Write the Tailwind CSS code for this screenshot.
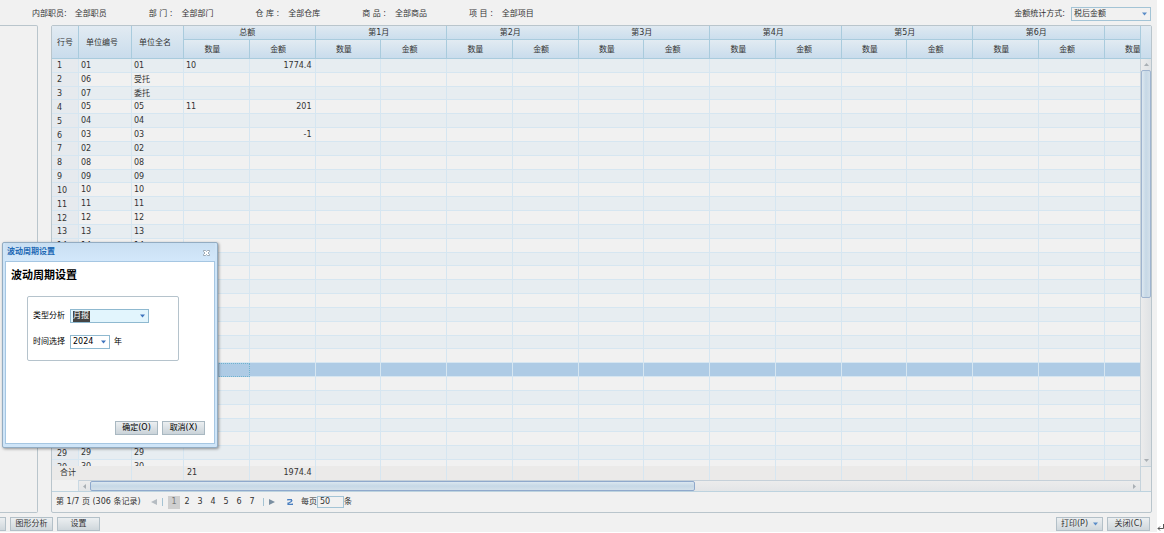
<!DOCTYPE html>
<html lang="zh-CN">
<head>
  <meta charset="UTF-8">
  <meta name="viewport" content="width=device-width, initial-scale=1.0">
  <title>波动周期分析</title>
  <script src="https://cdn.jsdelivr.net/npm/@tailwindcss/browser@4"></script>
</head>
<body class="bg-white font-['DejaVu_Sans','Noto_Sans_CJK_SC',sans-serif] text-[8px] leading-3 text-[#333] overflow-hidden">
  <div class="relative flex h-screen pb-px">
    <main class="flex flex-1 min-w-0 flex-col bg-[#f1f1f1]">

      <!-- filters -->
      <header class="flex h-[25px] shrink-0 items-center justify-between pl-8 pr-[6px] pt-[2px]">
        <dl class="flex gap-[42px] whitespace-nowrap">
          <div class="flex gap-2"><dt>内部职员:</dt><dd>全部职员</dd></div>
          <div class="flex gap-[9px]"><dt>部 门 :</dt><dd>全部部门</dd></div>
          <div class="flex gap-[9px]"><dt>仓 库 :</dt><dd>全部仓库</dd></div>
          <div class="flex gap-[9px]"><dt>商 品 :</dt><dd>全部商品</dd></div>
          <div class="flex gap-[9px]"><dt>项 目 :</dt><dd>全部项目</dd></div>
        </dl>
        <div class="flex items-center gap-[6px]">
          <label for="amount-mode">金额统计方式:</label>
          <div class="relative">
            <select id="amount-mode" class="block h-[14px] w-20 appearance-none border border-[#a3c4d6] bg-[#f1f1f1] pl-[2px]">
              <option>税后金额</option>
              <option>税前金额</option>
            </select>
            <svg class="pointer-events-none absolute right-1 top-[5px] h-1 w-[5px] fill-[#5a8cc8]" viewBox="0 0 5 4"><path d="M0 0.5h5L2.5 3.5z"/></svg>
          </div>
        </div>
      </header>

      <div class="flex min-h-0 flex-1 pr-[5px]">
        <aside class="mr-[13px] w-[38px] shrink-0 rounded-r-xs border border-l-0 border-[#b9c5cc]"></aside>

        <!-- data grid -->
        <section class="flex min-w-0 flex-1 flex-col rounded-xs border border-[#b9c5cc]">
          <div class="flex h-[33px] shrink-0">
            <div class="min-w-0 flex-1 overflow-hidden">
              <table class="h-[33px] w-[1184px] table-fixed border-separate border-spacing-0">
                <thead id="grid-head"></thead>
              </table>
            </div>
            <div class="w-[11px] border-b border-l border-[#a9cbdd] bg-linear-to-b from-[#e2ebf2] to-[#c9dcec]"></div>
          </div>

          <div class="flex min-h-0 flex-1">
            <div class="min-w-0 flex-1 overflow-hidden">
              <table class="h-[415px] w-[1184px] table-fixed border-separate border-spacing-0 leading-[11px]">
                <tbody id="grid-body"></tbody>
              </table>
            </div>
            <div class="flex w-[11px] flex-col items-center border-l border-[#c9d3da] bg-linear-to-r from-[#ececec] to-[#dfe2e5]">
              <svg class="my-1 h-[3px] w-[5px] shrink-0 fill-[#a9afb4]" viewBox="0 0 5 3"><path d="M0 3h5L2.5 0z"/></svg>
              <div class="h-[56%] w-full rounded-xs border border-[#9fb4cf] bg-linear-to-r from-[#dde8f0] via-[#c6d8e6] to-[#d3e0ea]"></div>
              <div class="flex-1"></div>
              <svg class="my-1 h-[3px] w-[5px] shrink-0 fill-[#a9afb4]" viewBox="0 0 5 3"><path d="M0 0h5L2.5 3z"/></svg>
            </div>
          </div>

          <div class="flex h-[26px] shrink-0 border-b border-[#bdd3df]">
            <div class="min-w-0 flex-1 overflow-hidden">
              <table class="h-[14px] w-[1184px] table-fixed border-separate border-spacing-0 bg-[#ebeae9]">
                <tbody id="grid-foot"></tbody>
              </table>
              <div class="flex h-[11px]">
                <div class="w-[27px] shrink-0 border-r border-[#c9d9e4]"></div>
                <div class="flex flex-1 items-center border-t border-[#c5d0d9] bg-linear-to-b from-[#ececec] to-[#e3e5e7]">
                  <svg class="mx-1 h-[5px] w-[3px] shrink-0 fill-[#a9afb4]" viewBox="0 0 3 5"><path d="M3 0v5L0 2.5z"/></svg>
                  <div class="h-full w-[57%] rounded-xs border border-[#8fa9cc] bg-linear-to-b from-[#dbe7f0] via-[#c6d8e6] to-[#d3e0ea]"></div>
                  <div class="flex-1"></div>
                  <svg class="mx-1 h-[5px] w-[3px] shrink-0 fill-[#a9afb4]" viewBox="0 0 3 5"><path d="M0 0v5L3 2.5z"/></svg>
                </div>
              </div>
            </div>
            <div class="w-[11px] border-l border-t border-[#c5d3dc] bg-[#ececec]"></div>
          </div>

          <nav class="flex h-5 shrink-0 items-center pl-1">
            <span class="w-[92px] whitespace-nowrap">第 1/7 页 (306 条记录)</span>
            <button type="button" class="ml-[3px]" aria-label="上一页"><svg class="h-[6px] w-[6px] fill-[#b5bcc2]" viewBox="0 0 6 6"><path d="M6 0v6L0 3z"/></svg></button>
            <span class="mx-[5px] h-2 w-px bg-[#a5c3d3]"></span>
            <div id="pages" class="flex gap-px"></div>
            <span class="mx-[5px] h-2 w-px bg-[#a5c3d3]"></span>
            <button type="button" aria-label="下一页"><svg class="h-[6px] w-[6px] fill-[#7b8fa1]" viewBox="0 0 6 6"><path d="M0 0v6l6-3z"/></svg></button>
            <button type="button" class="ml-3 mr-2" aria-label="刷新">
              <svg class="h-[6px] w-[6px] fill-none stroke-[#4a7fc0]" stroke-width="1.2" viewBox="0 0 6 6"><path d="M.8 1.600V.6h3.600v1.800L1.400 4.200M4.400 1.600h1M1 3.600v1.800h4.400V4.400"/></svg>
            </button>
            <label for="page-size">每页</label>
            <input id="page-size" type="text" value="50" class="h-3 w-[27px] border border-[#a3c4d6] pl-[2px]">
            <span>条</span>
          </nav>
        </section>
      </div>

      <footer class="flex h-[19px] shrink-0 items-end justify-between pb-px pr-[7px]">
        <div class="flex gap-1">
          <button type="button" aria-label="更多" class="h-[14px] w-[6px] border border-l-0 border-[#b3c0c8] bg-linear-to-b from-[#eceff1] to-[#cfd7dc]"></button>
          <button type="button" class="h-[14px] w-[43px] border border-[#b3c0c8] bg-linear-to-b from-[#eceff1] to-[#cfd7dc]">图形分析</button>
          <button type="button" class="h-[14px] w-[43px] border border-[#b3c0c8] bg-linear-to-b from-[#eceff1] to-[#cfd7dc]">设置</button>
        </div>
        <div class="flex gap-1">
          <button type="button" class="flex h-[14px] w-[47px] items-center justify-between border border-[#b3c0c8] bg-linear-to-b from-[#eceff1] to-[#cfd7dc] px-1">打印(P)
            <svg class="h-1 w-[5px] fill-[#5a8cc8]" viewBox="0 0 5 4"><path d="M0 0.5h5L2.5 3.5z"/></svg>
          </button>
          <button type="button" class="h-[14px] w-[43px] border border-[#b3c0c8] bg-linear-to-b from-[#eceff1] to-[#cfd7dc]">关闭(C)</button>
        </div>
      </footer>
    </main>

    <div class="flex w-[7px] items-end overflow-hidden">
      <svg class="h-2 w-[7px] fill-none stroke-[#555]" viewBox="0 0 7 8"><path d="M6.5 0v4.5H1M3 2.5l-2 2 2 2"/></svg>
    </div>

    <!-- period dialog -->
    <div role="dialog" aria-labelledby="dialog-title" class="absolute left-[2px] top-[242px] flex h-[206px] w-[216px] flex-col rounded-xs border border-[#93acc2] bg-[#cfe5f8] px-[2px] pb-[3px] text-black shadow-[1px_1px_3px_rgba(0,0,0,0.4)]">
      <div class="flex h-[18px] items-center justify-between bg-linear-to-b from-[#c9dff2] to-[#d3e8fb] pl-[2px] pr-1">
        <h2 id="dialog-title" class="font-bold text-[#2068b4]">波动周期设置</h2>
        <button type="button" aria-label="关闭" class="mr-px mt-[2px]"><svg class="h-[6px] w-[7px] fill-white stroke-[#8c98a3]" stroke-width=".8" viewBox="0 0 7 6"><path d="M.5.5h2l1 1 1-1h2v1L5 3l1.500 1.500v1h-2l-1-1-1 1h-2v-1L2 3 .5 1.500z"/></svg></button>
      </div>
      <form class="flex flex-1 flex-col border border-[#a5c6e2] bg-white px-[5px] pb-2 pt-[6px]">
        <h1 class="text-[11px] font-bold leading-4">波动周期设置</h1>
        <fieldset class="ml-4 mt-3 flex h-[65px] w-[152px] flex-col gap-3 rounded-xs border border-[#b5c3cc] pl-[5px] pt-3">
          <div class="flex items-center">
            <label for="report-type" class="w-[37px]">类型分析</label>
            <div class="relative">
              <select id="report-type" class="block h-[14px] w-[79px] appearance-none border border-[#8fb9d0] bg-[#e2f5fd] bg-[linear-gradient(#444,#444)] bg-[length:17px_11px] bg-[position:2px_center] bg-no-repeat pl-[2px] text-white">
                <option>月报</option>
                <option>季报</option>
              </select>
              <svg class="pointer-events-none absolute right-1 top-[5px] h-1 w-[5px] fill-[#3f74bd]" viewBox="0 0 5 4"><path d="M0 0.5h5L2.5 3.5z"/></svg>
            </div>
          </div>
          <div class="flex items-center">
            <label for="report-year" class="w-[37px]">时间选择</label>
            <div class="relative">
              <select id="report-year" class="block h-[14px] w-10 appearance-none border border-[#8fb9d0] bg-white pl-[2px]">
                <option>2024</option>
                <option>2023</option>
              </select>
              <svg class="pointer-events-none absolute right-1 top-[5px] h-1 w-[5px] fill-[#3f74bd]" viewBox="0 0 5 4"><path d="M0 0.5h5L2.5 3.5z"/></svg>
            </div>
            <span class="ml-1">年</span>
          </div>
        </fieldset>
        <div class="mt-auto flex justify-end gap-1 pr-1">
          <button type="button" class="h-[14px] w-[43px] border border-[#a9b8c1] bg-linear-to-b from-[#eceff1] to-[#cad3d9]">确定(O)</button>
          <button type="button" class="h-[14px] w-[43px] border border-[#a9b8c1] bg-linear-to-b from-[#eceff1] to-[#cad3d9]">取消(X)</button>
        </div>
      </form>
    </div>
  </div>

  <script>
    const groups = ['总额', '第1月', '第2月', '第3月', '第4月', '第5月', '第6月', '第7月'];
    const cols = '<colgroup><col class="w-[27px]"><col class="w-[53px]"><col class="w-[52px]">' + '<col>'.repeat(16) + '</colgroup>';
    document.querySelectorAll('table').forEach(t => t.insertAdjacentHTML('afterbegin', cols));

    // header
    const leadCell = 'border-b border-r border-[#a9cbdd] bg-linear-to-b from-[#e2ebf2] to-[#c9dcec] p-0 pl-[5px] pt-px text-left font-normal';
    const groupCell = 'h-[14px] border-b border-r border-[#a9cbdd] bg-linear-to-b from-[#dfe9f1] to-[#cbdeed] p-0 font-normal';
    const subCell = 'h-[19px] border-b border-r border-[#a9cbdd] bg-linear-to-b from-[#e2ebf2] to-[#c9dcec] p-0 pr-2 pt-px font-normal';
    document.getElementById('grid-head').innerHTML =
      `<tr><th rowspan="2" class="${leadCell}">行号</th>` +
      ['单位编号', '单位全名'].map(t => `<th rowspan="2" class="${leadCell}"><span class="pl-[2px]">${t}</span></th>`).join('') +
      groups.map(g => `<th colspan="2" class="${groupCell}"><span class="block pr-1">${g}</span></th>`).join('') + '</tr>' +
      '<tr>' + groups.map(() => `<th class="${subCell}">数量</th><th class="${subCell}">金额</th>`).join('') + '</tr>';

    // rows
    const head = [
      ['01', '01', '10', '1774.4'], ['06', '受托'], ['07', '委托'], ['05', '05', '11', '201'],
      ['04', '04'], ['03', '03', '', '-1'], ['02', '02']
    ];
    const rows = [];
    for (let i = 1; i <= 30; i++) {
      const code = String(i).padStart(2, '0');
      rows.push(head[i - 1] || [code, code]);
    }
    const cell = 'overflow-hidden whitespace-nowrap border-b border-r border-[#d6e6f1] p-0 pl-[2px]';
    const picked = 'border border-dotted border-[#6fb3cf] p-0';
    const num = 'overflow-hidden whitespace-nowrap border-b border-r border-[#d6e6f1] p-0 pr-[3px] text-right';
    document.getElementById('grid-body').innerHTML = rows.map((r, i) => {
      const bg = i === 22 ? 'bg-[#aecbe5]' : i % 2 ? 'bg-[#f1f1f1]' : 'bg-[#e7edf1]';
      let html = `<td class="border-b border-r border-[#d6e6f1] bg-[#e6eaee] p-0 pl-[5px] pt-px">${i + 1}</td>`;
      html += `<td class="${cell}">${r[0]}</td><td class="${cell}">${r[1]}</td>`;
      html += `<td class="${i === 22 ? picked : cell}">${r[2] || ''}</td><td class="${num}">${r[3] || ''}</td>`;
      html += `<td class="${cell}"></td>`.repeat(14);
      return `<tr class="${bg}">${html}</tr>`;
    }).join('');

    // totals
    const foot = 'border-r border-[#d6e6f1] p-0 pl-[3px]';
    document.getElementById('grid-foot').innerHTML =
      `<tr><td class="p-0 pl-2 whitespace-nowrap">合计</td><td class="${foot}"></td><td class="${foot}"></td><td class="${foot}">21</td>` +
      `<td class="border-r border-[#d6e6f1] p-0 pr-[3px] text-right">1974.4</td>` + `<td class="${foot}"></td>`.repeat(14) + '</tr>';

    // pager
    document.getElementById('pages').innerHTML = [1, 2, 3, 4, 5, 6, 7].map(n =>
      `<button type="button" class="${n === 1 ? 'h-[13px] w-3 bg-[#cfcfcf] text-[#777]' : 'h-[13px] w-3'}">${n}</button>`).join('');
  </script>
</body>
</html>
